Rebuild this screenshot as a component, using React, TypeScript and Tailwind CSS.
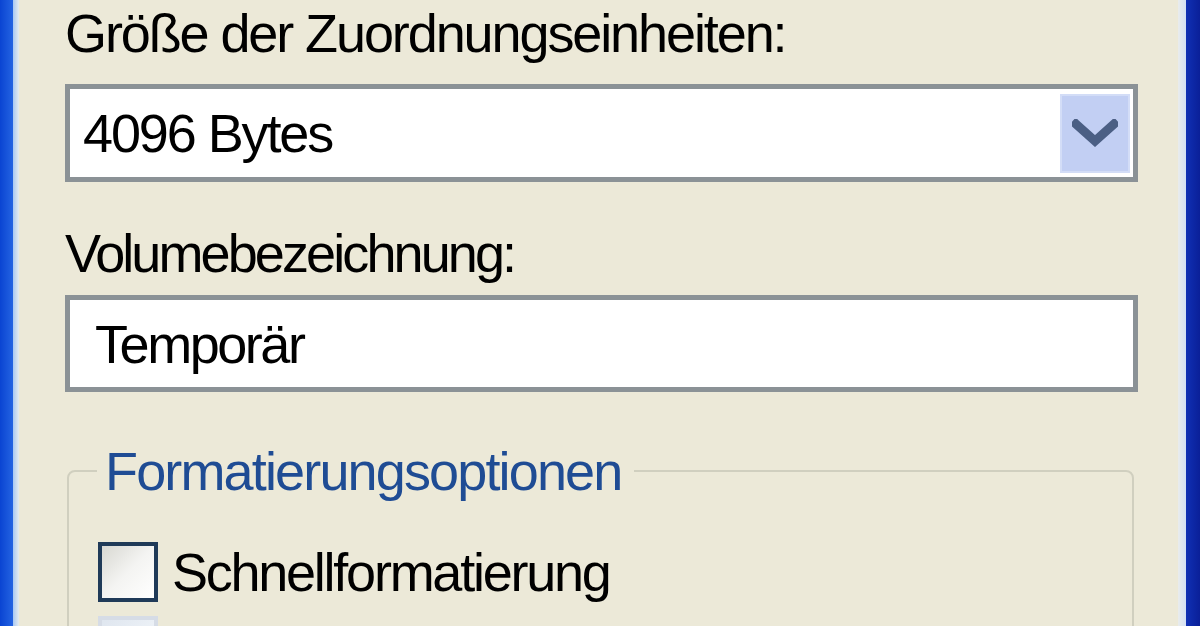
import React from "react";

const font = { fontFamily: '"Liberation Sans", Arial, sans-serif' };

const Chevron = () => (
  <svg width="46" height="28" viewBox="0 0 46 28" className="block">
    <polyline
      points="4,5 23,22 42,5"
      fill="none"
      stroke="#4b5f84"
      strokeWidth="9"
      strokeLinecap="square"
      strokeLinejoin="miter"
    />
  </svg>
);

const Checkbox = ({ disabled = false }: { disabled?: boolean }) => (
  <div
    className={
      disabled
        ? "h-[60px] w-[60px] shrink-0 border-[4px] border-[#d6dce6] bg-gradient-to-br from-[#dfe6ef] to-[#f6f9fc]"
        : "h-[60px] w-[60px] shrink-0 border-[4px] border-[#1f3a58] bg-gradient-to-br from-[#d8d8d2] via-[#f4f4f2] to-[#ffffff]"
    }
  />
);

export default function App() {
  return (
    <div
      className="flex h-[626px] w-[1200px] overflow-hidden bg-[#ece9d8] text-black antialiased"
      style={font}
    >
      {/* window frame, left */}
      <div className="w-[13px] shrink-0 bg-gradient-to-r from-[#0a44d2] to-[#2463e2]" />
      <div className="w-[6px] shrink-0 bg-gradient-to-r from-[#a9c8f2] to-[#e6ecef]" />

      <div className="flex-1 pl-[46px] pr-[40px] pt-[6px]">
        <div className="h-[54px] text-[54px] leading-[54px] tracking-[-2.1px]">
          Größe der Zuordnungseinheiten:
        </div>

        {/* combo box */}
        <div className="mt-[24px] flex h-[98px] items-center border-[5px] border-[#8b9296] bg-white pr-[3px]">
          <div className="flex-1 pl-[13px] text-[54px] leading-[54px] tracking-[-2.1px]">
            4096 Bytes
          </div>
          <div className="flex h-[79px] w-[70px] items-center justify-center border-[2px] border-[#d3ddf7] bg-[#c2cff3]">
            <Chevron />
          </div>
        </div>

        <div className="mt-[44px] h-[54px] text-[54px] leading-[54px] tracking-[-2.9px]">
          Volumebezeichnung:
        </div>

        {/* text box */}
        <div className="mt-[15px] flex h-[97px] items-center border-[5px] border-[#8b9296] bg-white pl-[25px]">
          <span className="text-[54px] leading-[54px] tracking-[-2.45px]">Temporär</span>
        </div>

        {/* group box */}
        <fieldset className="mt-[52px] ml-[2px] mr-[4px] h-[220px] rounded-[8px] border-[2px] border-[#d0cfbf] pl-[28px]">
          <legend className="px-[8px] pr-[13px] text-[54px] leading-[54px] tracking-[-1.85px] text-[#1f4c94]">
            Formatierungsoptionen
          </legend>
          <div className="mt-[44px] flex items-center gap-[14px] pl-[1px]">
            <Checkbox />
            <span className="text-[54px] leading-[54px] tracking-[-2.25px]">
              Schnellformatierung
            </span>
          </div>
          <div className="mt-[14px] flex items-center pl-[1px]">
            <Checkbox disabled />
          </div>
        </fieldset>
      </div>

      {/* window frame, right */}
      <div className="w-[8px] shrink-0 bg-gradient-to-r from-[#e9ecec] to-[#d3e0f4]" />
      <div className="w-[14px] shrink-0 bg-gradient-to-r from-[#1030b4] to-[#0a1f98]" />
    </div>
  );
}
